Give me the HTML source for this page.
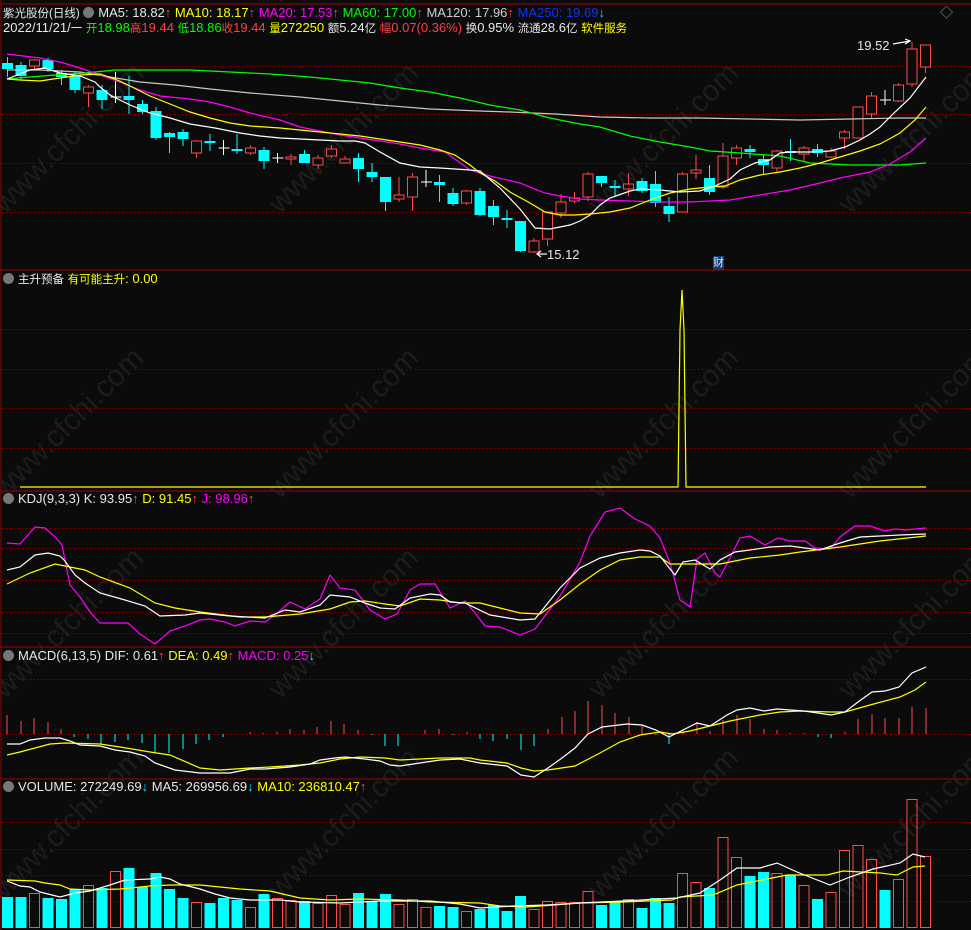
<!DOCTYPE html>
<html><head><meta charset="utf-8"><style>
body{margin:0;background:#0b0b0b;width:971px;height:930px;overflow:hidden;position:relative;font-family:"Liberation Sans","Noto Sans CJK SC",sans-serif;font-size:13px;}
.t{position:absolute;white-space:nowrap;line-height:14px;}
.z{font-size:11.5px}
.w{color:#e8e8e8}.y{color:#ffff00}.m{color:#ff00ff}.g{color:#00ff00}.r{color:#ff4040}.c{color:#00e5ff}.b{color:#1030ff}.gr{color:#cfcfcf}
.ic{display:inline-block;width:11px;height:11px;border-radius:50%;background:#777;vertical-align:-1px;margin-right:4px}
svg{position:absolute;left:0;top:0}
</style></head><body>
<svg id="s" width="971" height="930"></svg>
<div class="t w" style="left:3px;top:6px"><span class="z">紫光股份(日线)</span> <span class="ic"></span>MA5: 18.82<span class="r">↑</span> <span class="y">MA10: 18.17</span><span class="r">↑</span> <span class="m">MA20: 17.53</span><span class="r">↑</span> <span class="g">MA60: 17.00</span><span class="r">↑</span> <span class="gr">MA120: 17.96</span><span class="r">↑</span> <span class="b">MA250: 19.69</span><span class="c">↓</span></div>
<div class="t w" style="left:3px;top:21px">2022/11/21/<span class="z">一</span> <span class="g"><span class="z">开</span>18.98</span><span class="r"><span class="z">高</span>19.44</span> <span class="g"><span class="z">低</span>18.86</span><span class="r"><span class="z">收</span>19.44</span> <span class="y"><span class="z">量</span>272250</span> <span class="z">额</span>5.24<span class="z">亿</span> <span class="r"><span class="z">幅</span>0.07(0.36%)</span> <span class="z">换</span>0.95% <span class="z">流通</span>28.6<span class="z">亿</span> <span class="y z">软件服务</span></div>
<div class="t w" style="left:857px;top:39px">19.52</div>
<div class="t w" style="left:547px;top:248px">15.12</div>
<div class="t w" style="left:713px;top:256px;background:#0a3c78;font-size:11px">财</div>
<div class="t w" style="left:3px;top:272px"><span class="ic"></span><span class="z">主升预备</span> <span class="y"><span class="z">有可能主升</span>: 0.00</span></div>
<div class="t w" style="left:3px;top:492px"><span class="ic"></span>KDJ(9,3,3) K: 93.95<span class="r">↑</span> <span class="y">D: 91.45</span><span class="r">↑</span> <span class="m">J: 98.96</span><span class="r">↑</span></div>
<div class="t w" style="left:3px;top:649px"><span class="ic"></span>MACD(6,13,5) DIF: 0.61<span class="r">↑</span> <span class="y">DEA: 0.49</span><span class="r">↑</span> <span class="m">MACD: 0.25</span><span class="c">↓</span></div>
<div class="t w" style="left:3px;top:780px"><span class="ic"></span>VOLUME: 272249.69<span class="c">↓</span> MA5: 269956.69<span class="c">↓</span> <span class="y">MA10: 236810.47</span><span class="r">↑</span></div>
<div class="t" style="left:940px;top:6px;color:#999">◇</div>
<script>
var S='',R='#ff4a4a',C='#00ffff';
function L(x1,y1,x2,y2,c,d){S+='<line x1="'+x1+'" y1="'+y1+'" x2="'+x2+'" y2="'+y2+'" stroke="'+c+'" stroke-width="1"'+(d?' stroke-dasharray="1,3"':'')+'/>';}
function P(a,c){var p=[];for(var i=0;i<a.length;i+=2)p.push(a[i]+','+a[i+1]);S+='<polyline points="'+p.join(' ')+'" fill="none" stroke="'+c+'" stroke-width="1.2"/>';}
[[5,215],[280,215],[600,215],[850,215],[5,500],[280,500],[600,500],[850,500],[5,700],[280,700],[600,700],[850,700],[5,900],[280,900],[600,900],[850,900]].forEach(function(p){S+='<text x="'+p[0]+'" y="'+p[1]+'" fill="#1c1c1c" font-size="30" font-family="Liberation Sans" transform="rotate(-45 '+p[0]+' '+p[1]+')">www.cfchi.com</text>';});
L(0,4,971,4,'#a00000');L(1,0,1,930,'#8b0000');
[270,491,647,779].forEach(function(y){L(0,y,971,y,'#a00000');});
[66,114,163,212,329,369,408,448,528,548,580,612,633,679,734,822,849,875,901].forEach(function(y){L(2,y+.5,971,y+.5,'#a00000',1);});
var K=[[63,69,57,77,'c'],[65,76,62,80,'c'],[60,66,59,69,'r'],[60,69,58,72,'c'],[73,77,70,85,'c'],[76,90,72,93,'c'],[87,93,85,107,'r'],[90,100,85,109,'c'],[97,97,72,103,'w'],[96,100,76,114,'c'],[104,112,100,114,'c'],[111,138,107,140,'c'],[133,137,132,153,'c'],[132,139,129,146,'c'],[141,153,140,158,'r'],[141,143,134,151,'c'],[148,148,140,155,'w'],[149,151,134,154,'c'],[148,153,145,155,'r'],[150,161,147,169,'c'],[158,158,153,163,'w'],[157,159,154,165,'r'],[154,163,150,163,'c'],[158,165,155,169,'r'],[149,156,145,158,'r'],[159,163,156,163,'r'],[158,169,153,182,'c'],[172,177,163,182,'c'],[177,202,177,211,'c'],[195,199,177,202,'r'],[177,197,173,211,'r'],[182,182,170,187,'w'],[182,185,175,202,'c'],[193,204,188,206,'c'],[191,203,190,205,'r'],[191,215,188,216,'c'],[206,217,200,225,'c'],[218,218,210,228,'c'],[221,251,221,252,'c'],[241,252,238,253,'r'],[212,239,212,246,'r'],[202,213,194,218,'r'],[198,201,192,203,'r'],[174,197,172,201,'r'],[176,183,176,187,'c'],[186,188,180,196,'c'],[184,189,173,196,'r'],[181,191,178,193,'c'],[184,203,171,207,'c'],[206,214,197,222,'c'],[174,212,172,212,'r'],[170,173,155,179,'r'],[178,192,165,195,'c'],[156,187,143,189,'r'],[148,158,145,165,'r'],[149,152,145,158,'c'],[159,165,154,175,'c'],[151,168,150,172,'r'],[151,153,139,161,'c'],[148,154,146,161,'r'],[149,153,144,157,'c'],[151,157,148,158,'r'],[132,138,130,149,'r'],[107,138,107,138,'r'],[96,114,92,118,'r'],[100,100,90,105,'w'],[85,101,83,102,'r'],[49,84,42,87,'r'],[45,67,45,73,'r']];
K.forEach(function(k,i){var x=7.5+13.5*i,col=k[4]=='r'?R:(k[4]=='c'?C:'#fff');
L(x,k[2],x,k[3],col);
if(k[4]=='w'){L(x-5,k[0],x+6,k[0],col);}
else if(k[4]=='c'){S+='<rect x="'+(x-5.5)+'" y="'+k[0]+'" width="11" height="'+Math.max(2,k[1]-k[0])+'" fill="'+C+'"/>';}
else{S+='<rect x="'+(x-5)+'" y="'+k[0]+'" width="10" height="'+Math.max(2,k[1]-k[0])+'" fill="#0b0b0b" stroke="'+R+'" stroke-width="1"/>';}
});
P([7,70,40,70,80,72,110,77,140,82,175,85,210,89,250,93,300,97,340,101,380,105,430,109,480,111,510,112,555,114,600,117,650,118,700,118,750,119,800,120,850,119,900,118,926,118],'#c8c8c8');
P([7,79,30,77,55,75,85,73,115,70,135,70,190,70,230,72,270,74,310,77,340,80,370,83,400,88,430,92,460,98,490,105,520,110,550,118,580,124,600,127,630,136,660,142,690,147,710,151,740,153,780,156,810,163,850,165,900,165,926,163],'#00ff00');
P([7,54,40,58,60,62,80,68,100,75,120,82,140,90,160,96,190,99,210,102,230,107,250,113,280,120,300,127,320,131,340,135,360,138,380,141,400,144,420,148,445,152,470,170,490,176,520,183,545,193,560,196,580,199,600,200,630,201,660,202,690,202,710,201,730,200,760,195,790,190,820,183,840,178,870,172,890,164,910,152,926,138],'#ff00ff');
P([7,79,20,80,40,81,60,78,80,75,100,74,115,79,130,86,150,96,170,104,190,112,210,118,230,123,250,126,280,128,300,130,320,132,340,134,360,136,380,139,400,142,420,145,440,150,455,155,470,165,480,173,495,181,510,192,530,203,545,212,560,215,575,215,590,214,610,212,630,208,650,200,670,193,690,189,710,187,725,186,740,180,760,175,780,172,800,168,820,163,840,157,860,151,880,144,900,133,915,120,926,107],'#ffff00');
P([7,79,30,70,45,68,60,73,80,76,95,82,100,87,110,95,130,105,150,113,170,118,190,124,215,128,240,133,260,136,280,138,300,139,320,140,340,141,355,141,365,143,380,152,400,163,420,167,440,168,470,170,480,171,500,188,520,209,535,228,550,229,570,225,580,221,590,215,600,205,610,198,630,191,640,189,660,190,680,192,700,191,715,186,730,179,740,170,755,163,770,160,780,153,790,152,810,152,830,151,845,147,860,140,870,134,880,127,895,112,910,98,926,77],'#ffffff');
P([893,44,910,41],'#fff');P([905,39,910,41,905,44],'#fff');P([537,254,547,254],'#fff');P([541,251,537,254,541,257],'#fff');
P([20,487,668,487,678,487,680,330,682,290,684,330,686,487,696,487,926,487],'#ffff00');
P([7,543,20,544,35,527,45,528,55,537,62,545,70,585,80,597,90,612,100,623,128,623,140,634,155,644,170,631,185,626,200,620,210,619,225,622,235,626,250,621,265,622,275,615,290,602,305,609,320,599,330,575,340,588,355,590,370,610,385,619,397,614,410,590,420,584,435,584,450,608,465,601,475,613,485,626,500,627,520,635,535,629,560,596,580,562,590,536,605,512,620,508,635,519,650,526,660,538,670,563,680,600,690,607,697,559,705,553,715,573,720,577,740,538,750,536,765,545,778,538,790,541,805,541,815,548,830,549,840,537,855,526,870,526,885,531,895,529,905,530,926,528],'#ff00ff');
P([7,584,30,573,55,564,65,566,85,570,100,577,130,588,155,603,175,608,200,612,240,617,265,617,300,614,330,609,350,602,365,601,385,604,400,606,420,599,440,600,460,603,480,603,500,608,520,613,540,614,560,600,580,584,600,570,620,560,640,557,660,557,670,564,700,564,720,564,750,558,780,555,800,552,840,547,880,541,926,536],'#ffff00');
P([7,570,20,567,35,555,48,553,60,556,65,561,75,575,85,583,100,593,125,600,145,606,160,616,185,615,200,613,230,616,265,618,285,610,300,612,320,605,330,595,350,597,365,603,380,608,395,609,410,598,430,594,440,595,450,602,465,603,490,615,520,620,535,619,560,588,580,568,600,558,620,553,640,550,650,551,660,556,670,569,675,575,683,562,695,560,710,569,720,560,735,552,750,550,770,547,790,546,820,550,840,543,860,537,900,535,926,534],'#ffffff');
var H=[[7,715],[21,721],[34,718],[48,722],[61,729],[74,737],[88,739],[101,744],[115,742],[128,740],[142,743],[155,753],[169,753],[183,749],[196,744],[209,740],[223,737],[250,732],[263,733],[277,732],[290,729],[304,730],[317,727],[331,721],[344,724],[358,730],[372,735],[385,746],[398,746],[425,730],[439,729],[453,735],[467,732],[480,739],[493,741],[507,739],[521,750],[534,746],[548,729],[562,717],[575,711],[588,701],[602,705],[615,713],[629,717],[642,725],[656,735],[669,744],[683,729],[697,722],[710,731],[723,720],[737,715],[750,719],[764,729],[777,730],[790,733],[804,733],[818,737],[831,738],[845,732],[858,719],[872,714],[885,718],[899,718],[912,707],[926,708]];
H.forEach(function(h){L(h[0],734,h[0],h[1],h[1]>734?C:R);});
P([7,755,20,752,35,748,50,744,65,743,100,744,120,747,150,752,170,755,200,768,220,770,250,768,270,767,300,765,320,763,340,759,360,757,385,758,400,760,440,758,470,758,480,760,507,763,521,768,534,771,548,770,575,766,600,753,620,742,640,735,660,732,672,734,690,731,710,726,730,721,760,715,780,712,800,711,830,712,845,712,870,705,900,697,915,690,926,682],'#ffff00');
P([7,744,20,744,30,740,45,738,60,738,70,741,80,745,100,746,115,750,130,752,145,756,155,763,175,770,200,773,230,773,250,769,265,769,290,767,310,764,320,760,335,758,345,757,365,759,380,761,390,765,400,766,420,763,440,760,460,759,480,763,507,766,521,775,534,777,548,768,562,758,575,748,588,734,602,727,627,724,642,725,656,730,669,737,683,730,697,723,710,726,727,715,737,710,750,708,764,711,777,709,804,711,818,713,831,715,845,712,858,702,872,692,885,691,899,687,912,673,926,667],'#ffffff');
var V=[[897,'c'],[897,'c'],[893,'r'],[898,'c'],[899,'c'],[889,'c'],[885,'r'],[888,'c'],[871,'r'],[868,'c'],[887,'c'],[873,'c'],[889,'c'],[898,'c'],[902,'r'],[903,'c'],[898,'c'],[900,'c'],[907,'r'],[894,'c'],[898,'r'],[900,'r'],[901,'c'],[903,'r'],[895,'r'],[904,'r'],[893,'c'],[901,'c'],[894,'c'],[904,'r'],[899,'r'],[907,'r'],[906,'c'],[907,'c'],[911,'r'],[909,'c'],[905,'c'],[911,'c'],[896,'c'],[909,'r'],[901,'r'],[902,'r'],[902,'r'],[891,'r'],[905,'c'],[901,'c'],[899,'r'],[908,'c'],[898,'c'],[903,'c'],[873,'r'],[882,'r'],[888,'c'],[837,'r'],[857,'r'],[876,'c'],[872,'c'],[873,'r'],[875,'c'],[885,'r'],[899,'c'],[892,'r'],[850,'r'],[845,'r'],[859,'r'],[890,'c'],[879,'r'],[799,'r'],[856,'r']];
V.forEach(function(v,i){var x=2+13.5*i;if(v[1]=='c')S+='<rect x="'+x+'" y="'+v[0]+'" width="11" height="'+(928-v[0])+'" fill="'+C+'"/>';else S+='<rect x="'+(x+.5)+'" y="'+(v[0]+.5)+'" width="10" height="'+(927-v[0])+'" fill="none" stroke="'+R+'" stroke-width="1"/>';});
P([7,880,35,881,45,883,60,885,70,889,90,890,120,889,150,886,170,885,200,885,220,887,240,889,270,891,300,898,330,900,360,899,400,900,430,902,480,903,500,906,527,907,580,903,623,902,672,900,680,897,713,895,737,885,767,879,787,875,827,875,843,871,880,873,897,875,913,867,925,866],'#ffff00');
P([7,881,20,886,30,887,40,892,60,897,75,893,90,891,110,885,125,880,150,879,160,877,170,879,180,884,200,889,215,894,230,898,250,900,280,900,300,902,340,903,380,901,430,901,460,904,480,908,513,906,547,905,580,903,623,901,677,898,700,893,720,880,737,868,760,868,777,863,797,872,830,885,850,877,873,869,900,863,913,854,925,857],'#ffffff');
document.getElementById('s').innerHTML=S;
</script>
</body></html>
